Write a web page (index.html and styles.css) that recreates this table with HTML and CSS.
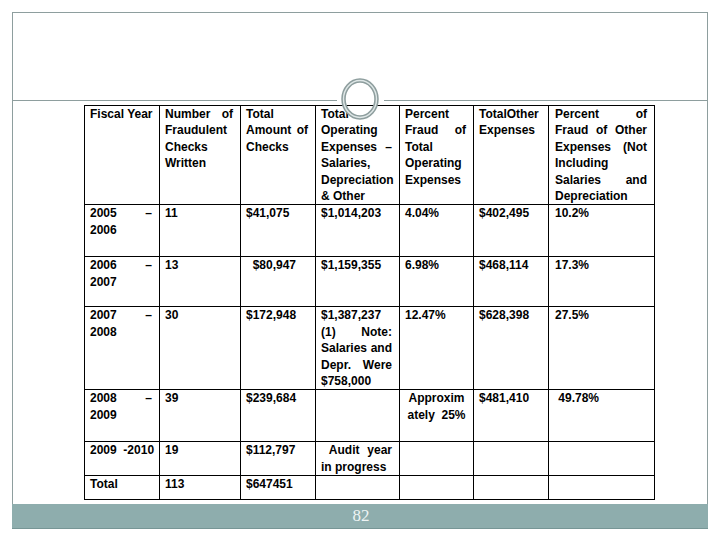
FILE: index.html
```html
<!DOCTYPE html>
<html>
<head>
<meta charset="utf-8">
<link rel="stylesheet" href="styles.css">
</head>
<body>
<div class="slide">
  <div class="title-area"></div>
  <div class="rule"><span class="rule-left"></span><span class="rule-right"></span></div>
  <svg class="ring" width="44" height="48" viewBox="0 0 44 48">
    <ellipse cx="22" cy="24" rx="16.5" ry="18.5" fill="none" stroke="#8e9e9e" stroke-width="4.5"/>
    <ellipse cx="22" cy="24" rx="16.5" ry="18.5" fill="none" stroke="#dfe7e7" stroke-width="1.4"/>
  </svg>
  <table class="data">
    <colgroup>
      <col class="c1"><col class="c2"><col class="c3"><col class="c4"><col class="c5"><col class="c6"><col class="c7">
    </colgroup>
    <tr class="r-head">
      <td class="nowrap">Fiscal Year</td>
      <td>Number of Fraudulent Checks Written</td>
      <td>Total Amount of Checks</td>
      <td>Total Operating Expenses – Salaries, Depreciation &amp; Other</td>
      <td>Percent Fraud of Total Operating Expenses</td>
      <td>TotalOther Expenses</td>
      <td class="wide">Percent of Fraud of Other Expenses (Not Including Salaries and Depreciation</td>
    </tr>
    <tr class="r1">
      <td>2005 – 2006</td>
      <td>11</td>
      <td>$41,075</td>
      <td>$1,014,203</td>
      <td>4.04%</td>
      <td>$402,495</td>
      <td class="wide">10.2%</td>
    </tr>
    <tr class="r2">
      <td>2006 – 2007</td>
      <td>13</td>
      <td>&nbsp;&nbsp;$80,947</td>
      <td>$1,159,355</td>
      <td>6.98%</td>
      <td>$468,114</td>
      <td class="wide">17.3%</td>
    </tr>
    <tr class="r3">
      <td>2007 – 2008</td>
      <td>30</td>
      <td>$172,948</td>
      <td>$1,387,237 (1) Note: Salaries and Depr. Were $758,000</td>
      <td>12.47%</td>
      <td>$628,398</td>
      <td class="wide">27.5%</td>
    </tr>
    <tr class="r4">
      <td>2008 – 2009</td>
      <td>39</td>
      <td>$239,684</td>
      <td></td>
      <td class="center">Approxim ately&nbsp; 25%</td>
      <td>$481,410</td>
      <td class="wide">&nbsp;49.78%</td>
    </tr>
    <tr class="r5">
      <td class="nowrap">2009&nbsp; -2010</td>
      <td>19</td>
      <td>$112,797</td>
      <td>&nbsp;Audit year in progress</td>
      <td></td>
      <td></td>
      <td class="wide"></td>
    </tr>
    <tr class="r6">
      <td>Total</td>
      <td>113</td>
      <td>$647451</td>
      <td></td>
      <td></td>
      <td></td>
      <td class="wide"></td>
    </tr>
  </table>
  <div class="footer-bar"><span class="page-num">82</span></div>
</div>
</body>
</html>
```

FILE: styles.css
```css
html, body {
  margin: 0;
  padding: 0;
  background: #ffffff;
}

.slide {
  position: relative;
  box-sizing: border-box;
  margin: 12px 0 0 12px;
  width: 696px;
  height: 517px;
  border: 1px solid #8e9e9e;
  border-bottom: none;
  display: flex;
  flex-direction: column;
}

.title-area {
  height: 87px;
  flex: none;
}

.rule {
  display: flex;
  gap: 47px;
  height: 1px;
  flex: none;
}

.rule-left {
  width: 324px;
  background: #8e9e9e;
}

.rule-right {
  flex: 1;
  background: #8e9e9e;
}

.ring {
  position: absolute;
  left: 325px;
  top: 62px;
  z-index: 2;
}

.data {
  margin: 4px 0 0 71px;
  border-collapse: collapse;
  table-layout: fixed;
  width: 570px;
  font-family: "Liberation Sans", Arial, sans-serif;
  font-weight: bold;
  font-size: 12px;
  line-height: 16.4px;
  color: #000;
  flex: none;
}

.c1 { width: 75px; }
.c2 { width: 81px; }
.c3 { width: 75px; }
.c4 { width: 84px; }
.c5 { width: 74px; }
.c6 { width: 75px; }
.c7 { width: 106px; }

.data td {
  border: 1px solid #000;
  padding: 0 7px 0 5px;
  vertical-align: top;
  text-align: justify;
  overflow: visible;
}

.data td.wide {
  padding-left: 6px;
}

.data td.center {
  text-align: center;
  padding-left: 7px;
}

.data td.nowrap {
  white-space: nowrap;
}

.r-head { height: 98px; }
.r1 { height: 52px; }
.r2 { height: 50px; }
.r3 { height: 82px; }
.r4 { height: 52px; }
.r5 { height: 32px; }
.r6 { height: 24px; }

.footer-bar {
  margin: auto -1px 0 -1px;
  height: 24px;
  background: #8eadad;
  border-bottom: 1px solid #779696;
  display: flex;
  justify-content: center;
  align-items: center;
  flex: none;
}

.page-num {
  font-family: "Liberation Serif", "Times New Roman", serif;
  font-size: 17px;
  color: #eef4f4;
  margin-left: 2px;
}
```
